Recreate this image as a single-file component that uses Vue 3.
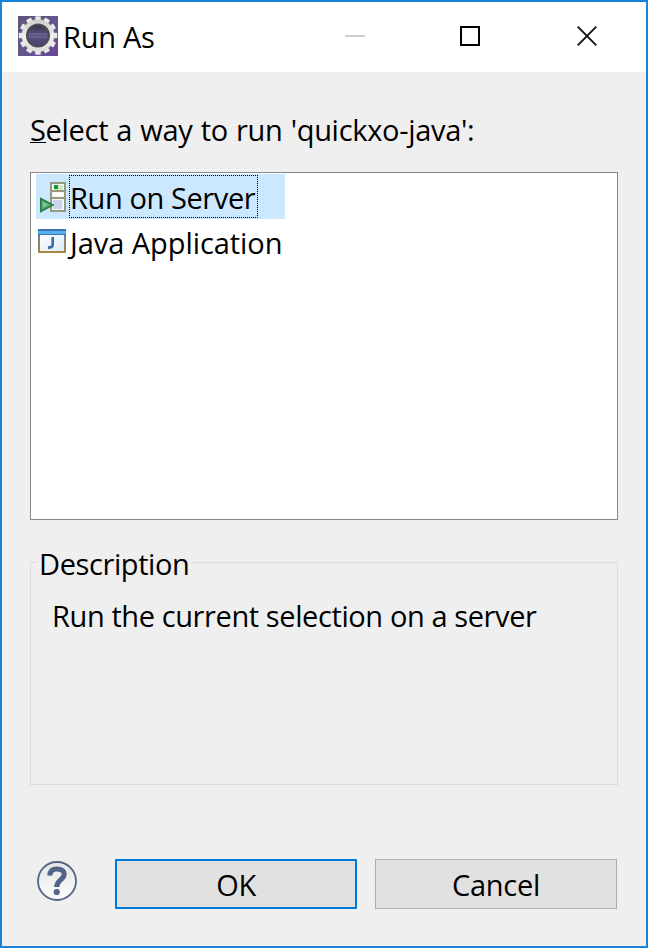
<script setup>
import { computed, ref } from 'vue'

const items = [
  { id: 'server', label: 'Run on Server', description: 'Run the current selection on a server' },
  { id: 'java', label: 'Java Application', description: 'Runs a Java application' }
]
const selectedId = ref('server')
const selected = computed(() => items.find((item) => item.id === selectedId.value))
const teeth = Array.from({ length: 12 }, (_, i) => i * 30)
</script>

<template>
  <div class="window">
    <header class="titlebar">
      <svg class="app-icon" viewBox="0 0 40 40">
        <defs>
          <linearGradient id="bg" x1="0" y1="0" x2="1" y2="1">
            <stop offset="0" stop-color="#5f5578" />
            <stop offset=".5" stop-color="#65568c" />
            <stop offset="1" stop-color="#66479a" />
          </linearGradient>
          <linearGradient id="ring" x1="0" y1="0" x2="0" y2="1">
            <stop offset="0" stop-color="#d0d0ce" />
            <stop offset=".5" stop-color="#f0f0ee" />
            <stop offset="1" stop-color="#dededc" />
          </linearGradient>
          <linearGradient id="hub" x1="0" y1="0" x2="0" y2="1">
            <stop offset="0" stop-color="#2f2e42" />
            <stop offset=".45" stop-color="#5b5482" />
            <stop offset="1" stop-color="#484070" />
          </linearGradient>
        </defs>
        <rect width="40" height="40" fill="url(#bg)" />
        <circle cx="20" cy="19.5" r="17.2" fill="#77718a" />
        <g fill="#e9e9e6">
          <rect
            v-for="a in teeth"
            :key="a"
            x="17.3"
            y="0.3"
            width="5.4"
            height="6"
            :transform="`rotate(${a} 20 19.5)`"
          />
        </g>
        <circle cx="20" cy="19.5" r="13.6" fill="none" stroke="url(#ring)" stroke-width="5" />
        <circle cx="20" cy="19.5" r="11" fill="url(#hub)" stroke="#4c4b50" stroke-width="2" />
        <path d="M11 18h18M11 21h18" stroke="#6e658f" stroke-width="1.6" />
      </svg>
      <h1 class="title">Run As</h1>
      <div class="controls">
        <svg viewBox="0 0 20 20"><path d="M0 10h20" stroke="#cccccc" stroke-width="2" /></svg>
        <svg viewBox="0 0 20 20"><rect x="1" y="1" width="18" height="18" fill="none" stroke="#000" stroke-width="2" /></svg>
        <svg viewBox="0 0 20 20"><path d="M.7.7l18.6 18.6M19.3.7L.7 19.3" stroke="#111" stroke-width="1.9" /></svg>
      </div>
    </header>

    <main class="content">
      <p class="prompt"><span class="mnemonic">S</span>elect a way to run 'quickxo-java':</p>

      <ul class="list">
        <li
          v-for="item in items"
          :key="item.id"
          class="row"
          :class="[item.id, { selected: item.id === selectedId }]"
          @click="selectedId = item.id"
        >
          <svg v-if="item.id === 'server'" class="row-icon" viewBox="0 0 32 32">
            <rect x="15" y="2" width="14" height="28" fill="#f2f5fa" stroke="#98987a" stroke-width="2" />
            <rect x="18" y="4" width="9" height="5" fill="#c9ecca" />
            <rect x="18" y="4" width="4" height="4" fill="#169a22" />
            <path d="M15 10h14M15 17h14" stroke="#98987a" stroke-width="2" />
            <path d="M17.5 13.5h9" stroke="#fff" stroke-width="3" />
            <rect x="17" y="19" width="9" height="9" fill="#cbd2ea" />
            <path d="M4.8 17.6v12.8L17 24z" fill="#55ad70" stroke="#287b49" stroke-width="1.6" />
            <path d="M7 21v5.5l5-2.7z" fill="#82c890" />
          </svg>
          <svg v-else class="row-icon" viewBox="0 0 32 32">
            <defs>
              <linearGradient id="frame" x1="0" y1="0" x2="0" y2="1">
                <stop offset="0" stop-color="#5c7ca4" />
                <stop offset="1" stop-color="#aa8745" />
              </linearGradient>
              <linearGradient id="pane" x1="0" y1="0" x2="1" y2="1">
                <stop offset="0" stop-color="#ffffff" />
                <stop offset="1" stop-color="#dcecf7" />
              </linearGradient>
            </defs>
            <rect x="3" y="4" width="26" height="22" fill="url(#pane)" stroke="url(#frame)" stroke-width="2" />
            <rect x="2" y="3" width="28" height="6" fill="#3973b0" />
            <rect x="2" y="5" width="28" height="3" fill="#55b0ec" />
            <path d="M16.7 11v7.4c0 2.4-1.2 3.2-4.7 3.2" fill="none" stroke="#356b9f" stroke-width="2.6" />
          </svg>
          <span class="row-label">{{ item.label }}</span>
        </li>
      </ul>

      <section class="group">
        <h2 class="legend">Description</h2>
        <p class="description">{{ selected.description }}</p>
      </section>

      <footer class="actions">
        <svg class="help" viewBox="0 0 40 40">
          <defs>
            <linearGradient id="glass" x1="0" y1="0" x2="0" y2="1">
              <stop offset="0" stop-color="#e5e5e5" />
              <stop offset="1" stop-color="#fcfcfc" />
            </linearGradient>
          </defs>
          <circle cx="20" cy="20" r="19" fill="url(#glass)" stroke="#536487" stroke-width="1.8" />
          <path
            d="M12.8 14.6C12.9 10 15.5 7.9 20 7.9c4.4 0 7.2 1.9 7.2 5.3 0 5.4-7.5 5.6-7.5 12.7"
            fill="none"
            stroke="#536487"
            stroke-width="5"
          />
          <circle cx="19.7" cy="31" r="3.1" fill="#536487" />
        </svg>
        <button class="button primary">OK</button>
        <button class="button cancel">Cancel</button>
      </footer>
    </main>
  </div>
</template>

<style>
body {
  margin: 0;
}
</style>

<style scoped>
.window {
  box-sizing: border-box;
  width: 648px;
  height: 948px;
  display: flex;
  flex-direction: column;
  border: 2px solid #1a82d7;
  background: #efefef;
  color: #000;
  font: 400 29px/40px "Open Sans", "Noto Sans", sans-serif;
  letter-spacing: -0.4px;
  white-space: nowrap;
}
h1,
h2,
p,
ul {
  margin: 0;
  padding: 0;
  font: inherit;
}
.titlebar {
  box-sizing: border-box;
  height: 70px;
  display: flex;
  align-items: flex-start;
  padding: 14px 49px 0 16px;
  background: #fff;
}
.app-icon {
  width: 40px;
  height: 40px;
}
.title {
  padding: 1px 0 0 5px;
  letter-spacing: -0.25px;
}
.controls {
  display: flex;
  gap: 97px;
  margin: 10px 0 0 auto;
}
.controls svg {
  width: 20px;
  height: 20px;
}
.controls svg:first-child {
  margin-right: -2px;
}
.content {
  flex: 1;
  display: flex;
  flex-direction: column;
  padding: 38px 28px 37px;
}
.prompt {
  height: 62px;
  box-sizing: border-box;
  letter-spacing: -0.3px;
  word-spacing: 0.9px;
}
.mnemonic {
  display: inline-block;
  height: 32px;
  line-height: 40px;
  box-shadow: 0 1px #000;
  vertical-align: top;
}
.list {
  box-sizing: border-box;
  height: 348px;
  padding: 1px 5px;
  border: 1px solid #828790;
  background: #fff;
  list-style: none;
}
.row {
  width: 249px;
  height: 45px;
  display: flex;
}
.row.selected {
  background: #cce8ff;
}
.row-icon {
  width: 32px;
  height: 32px;
  margin-top: 7px;
}
.row-label {
  box-sizing: border-box;
  height: 43px;
  width: 189px;
  margin: 1px 0 0 1px;
  padding-top: 2px;
  border: 1px solid transparent;
}
.java .row-label {
  letter-spacing: -0.06px;
}
.selected .row-label {
  border: 1px dotted #000;
}
.group {
  box-sizing: border-box;
  height: 223px;
  margin-top: 42px;
  border: 1px solid #dcdcdc;
}
.legend {
  width: 155px;
  height: 40px;
  box-sizing: border-box;
  margin: -19px 0 0 6px;
  padding-left: 2px;
  background: #efefef;
}
.description {
  padding: 12px 0 0 21px;
}
.actions {
  display: flex;
  gap: 18px;
  margin-top: auto;
}
.help {
  width: 40px;
  height: 40px;
  margin: 2px 20px 0 7px;
}
.button {
  box-sizing: border-box;
  width: 242px;
  height: 50px;
  padding: 1px 0 0;
  border: 1px solid #adadad;
  background: #e1e1e1;
  color: inherit;
  font: inherit;
  letter-spacing: -0.3px;
}
.primary {
  border: 2px solid #0078d7;
}
</style>
